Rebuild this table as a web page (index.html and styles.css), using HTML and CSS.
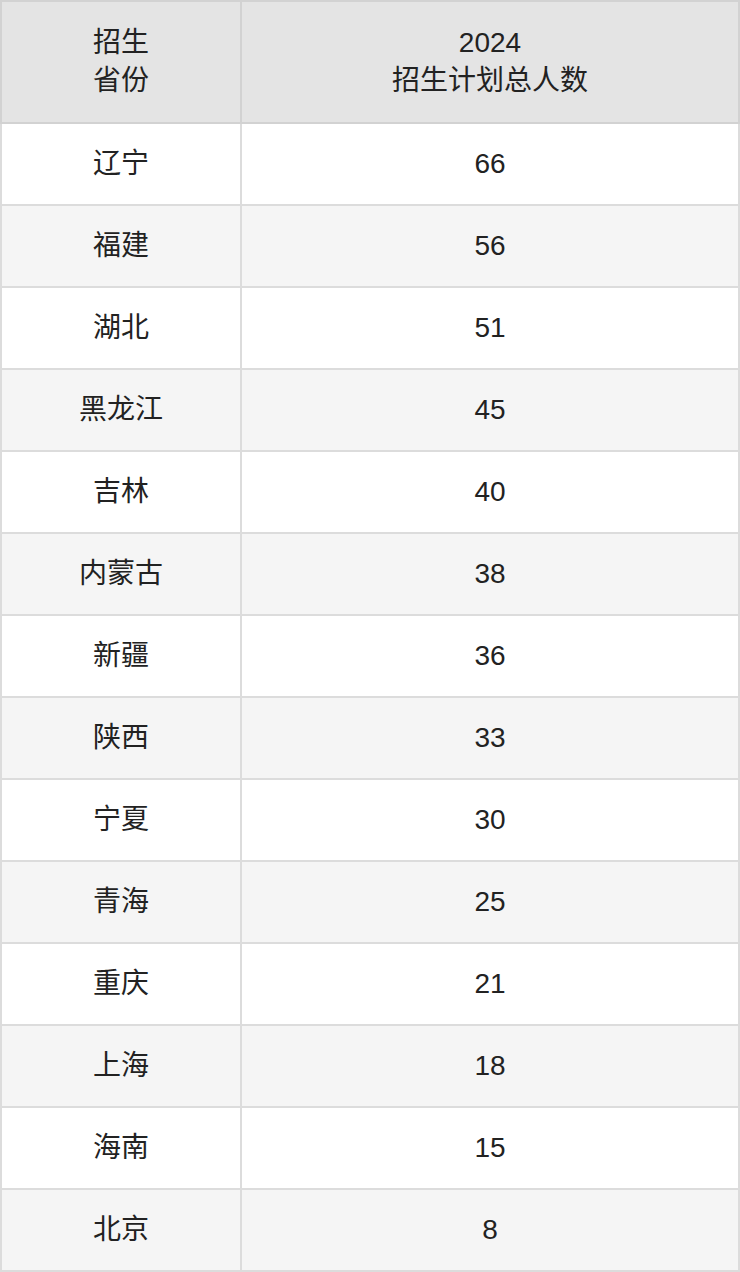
FILE: index.html
```html
<!DOCTYPE html>
<html lang="zh">
<head>
<meta charset="utf-8">
<link rel="stylesheet" href="styles.css">
</head>
<body>
<table class="plan">
  <thead>
    <tr>
      <th class="col-prov">招生<br>省份</th>
      <th class="col-num">2024<br>招生计划总人数</th>
    </tr>
  </thead>
  <tbody>
    <tr><td>辽宁</td><td>66</td></tr>
    <tr><td>福建</td><td>56</td></tr>
    <tr><td>湖北</td><td>51</td></tr>
    <tr><td>黑龙江</td><td>45</td></tr>
    <tr><td>吉林</td><td>40</td></tr>
    <tr><td>内蒙古</td><td>38</td></tr>
    <tr><td>新疆</td><td>36</td></tr>
    <tr><td>陕西</td><td>33</td></tr>
    <tr><td>宁夏</td><td>30</td></tr>
    <tr><td>青海</td><td>25</td></tr>
    <tr><td>重庆</td><td>21</td></tr>
    <tr><td>上海</td><td>18</td></tr>
    <tr><td>海南</td><td>15</td></tr>
    <tr><td>北京</td><td>8</td></tr>
  </tbody>
</table>
</body>
</html>
```
FILE: styles.css
```css
html, body {
  margin: 0;
  padding: 0;
  background: #ffffff;
}
.plan {
  width: 740px;
  border-collapse: collapse;
  table-layout: fixed;
  font-family: "Liberation Sans", "Noto Sans CJK SC", sans-serif;
  font-size: 28px;
  color: #222222;
}
.plan th,
.plan td {
  border: 2px solid #dcdcdc;
  text-align: center;
  vertical-align: middle;
  padding: 0;
}
.plan th {
  background: #e4e4e4;
  border-color: #d2d2d2;
  font-weight: normal;
  height: 120px;
  line-height: 38px;
}
.plan td {
  height: 80px;
  line-height: 32px;
}
.plan .col-prov {
  width: 238px;
}
.plan tbody tr:nth-child(even) td {
  background: #f5f5f5;
}
```
